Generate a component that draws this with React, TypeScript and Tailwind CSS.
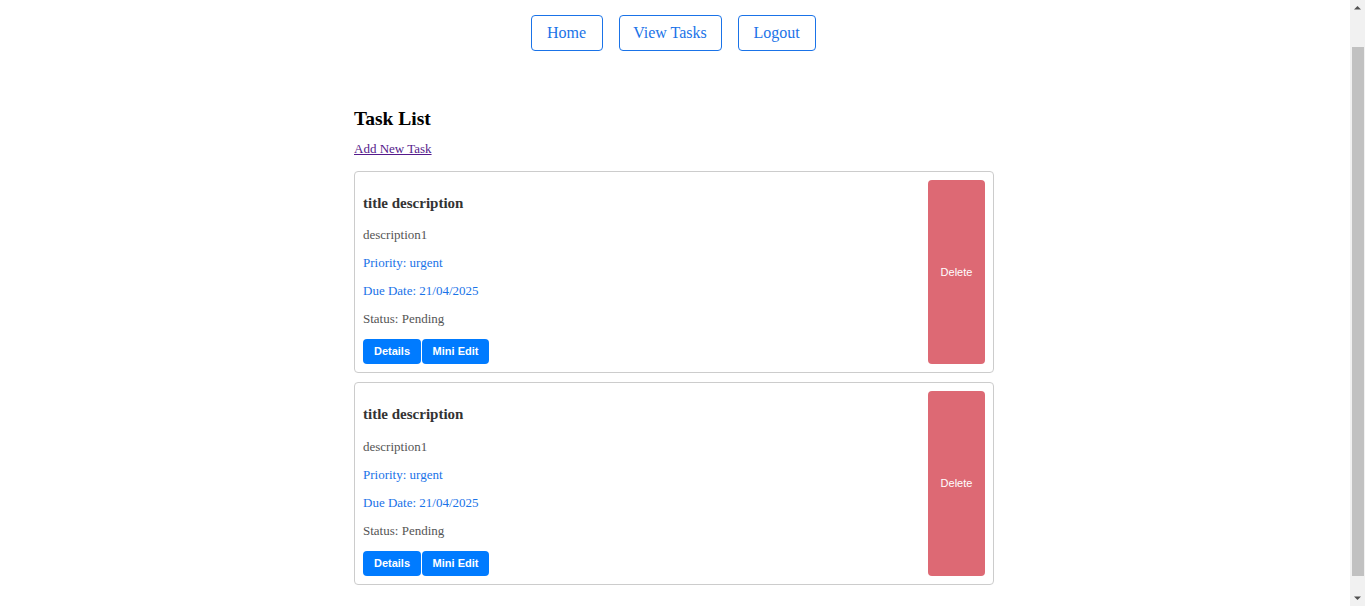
const tasks = [
  { id: 1, title: "title description", description: "description1", priority: "urgent", dueDate: "21/04/2025", status: "Pending" },
  { id: 2, title: "title description", description: "description1", priority: "urgent", dueDate: "21/04/2025", status: "Pending" },
];

function NavButton({ label, width }: { label: string; width: string }) {
  return (
    <button className={`h-[36px] rounded-[4px] border border-[#1a73e8] bg-white text-[16px] text-[#1a73e8] ${width}`}>
      {label}
    </button>
  );
}

function TaskCard({ task }: { task: (typeof tasks)[number] }) {
  return (
    <div className="flex rounded-[4px] border border-[#cccccc] p-[8px]">
      <div className="flex-1">
        <h3 className="mt-[15px] mb-[15px] text-[15px] leading-[17.5px] font-bold text-[#333333]">{task.title}</h3>
        <p className="mb-[13px] leading-[15px] text-[#555555]">{task.description}</p>
        <p className="mb-[13px] leading-[15px] text-[#1a73e8]">Priority: {task.priority}</p>
        <p className="mb-[13px] leading-[15px] text-[#1a73e8]">Due Date: {task.dueDate}</p>
        <p className="mb-[13px] leading-[15px] text-[#555555]">Status: {task.status}</p>
        <div className="flex gap-[1px] font-['Liberation_Sans',Arial,sans-serif]">
          <button className="h-[25px] w-[58px] rounded-[4px] bg-[#007bff] text-[11px] font-bold text-white">Details</button>
          <button className="h-[25px] w-[67px] rounded-[4px] bg-[#007bff] text-[11px] font-bold text-white">Mini Edit</button>
        </div>
      </div>
      <button className="w-[57px] rounded-[4px] bg-[#dd6974] font-['Liberation_Sans',Arial,sans-serif] text-[11px] text-white">
        Delete
      </button>
    </div>
  );
}

function Scrollbar() {
  return (
    <div className="flex h-[606px] w-[15px] shrink-0 flex-col items-center bg-[#f1f1f1]">
      <svg width="15" height="17" viewBox="0 0 15 17" className="shrink-0">
        <path d="M4 9.5 L7.5 6 L11 9.5 Z" fill="#505050" />
      </svg>
      <div className="mt-[30px] h-[529px] w-[12px] shrink-0 bg-[#c1c1c1]" />
      <div className="flex-1" />
      <svg width="15" height="17" viewBox="0 0 15 17" className="shrink-0">
        <path d="M4 7.5 L7.5 11 L11 7.5 Z" fill="#505050" />
      </svg>
    </div>
  );
}

export default function App() {
  return (
    <div className="flex h-[606px] overflow-hidden bg-white font-['Liberation_Serif','Times_New_Roman',serif] text-[13px] text-black">
      <div className="flex-1 pr-[2px] pb-[40px]">
        <nav className="flex justify-center gap-[16px] pt-[15px] pr-[2px]">
          <NavButton label="Home" width="w-[72px]" />
          <NavButton label="View Tasks" width="w-[103px]" />
          <NavButton label="Logout" width="w-[78px]" />
        </nav>
        <main className="mx-auto w-[640px]">
          <h2 className="mt-[57px] text-[19.5px] leading-[22px] font-bold">Task List</h2>
          <a href="#" className="mt-[9px] block w-fit text-[#551a8b] underline">
            Add New Task
          </a>
          <div className="mt-[12px] flex flex-col gap-[9px]">
            {tasks.map((t) => (
              <TaskCard key={t.id} task={t} />
            ))}
          </div>
        </main>
      </div>
      <Scrollbar />
    </div>
  );
}
